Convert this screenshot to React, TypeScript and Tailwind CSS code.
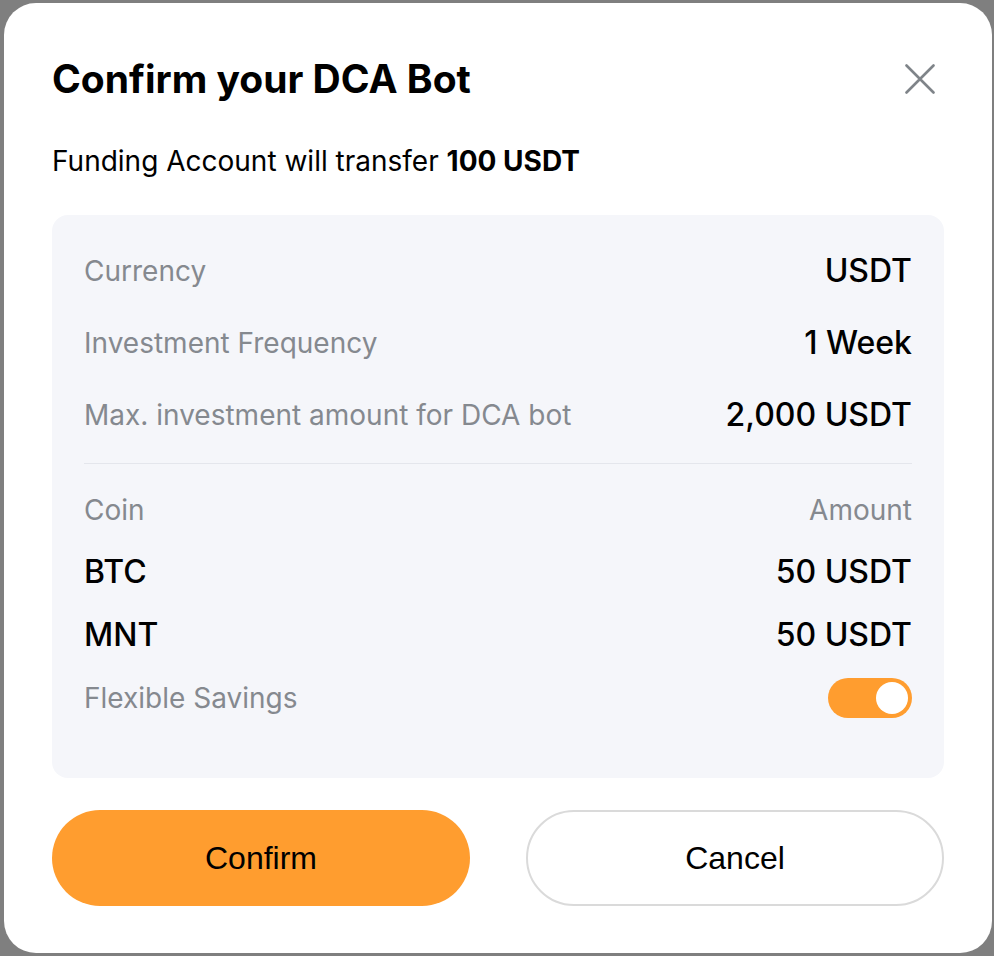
import { useState } from 'react';

const rows = [
  { label: 'Currency', value: 'USDT' },
  { label: 'Investment Frequency', value: '1 Week' },
  { label: 'Max. investment amount for DCA bot', value: '2,000 USDT' },
];

const coins = [
  { coin: 'BTC', amount: '50 USDT' },
  { coin: 'MNT', amount: '50 USDT' },
];

export default function App() {
  const [flexible, setFlexible] = useState(true);

  return (
    <div className="w-[994px] h-[956px] bg-[#7f7f7f] pt-[3px] pl-[4px] overflow-hidden font-['Inter',sans-serif]">
      <div className="w-[988px] h-[950px] bg-white rounded-[32px] px-12 pt-[54px] pb-12 flex flex-col">
        {/* Header */}
        <div className="flex items-center justify-between h-[44px]">
          <h1 className="text-[39px] leading-[44px] font-bold text-black">Confirm your DCA Bot</h1>
          <button className="mr-[9px]" aria-label="Close">
            <svg width="30" height="30" viewBox="0 0 30 30" fill="none">
              <path d="M1.5 1.5L28.5 28.5M28.5 1.5L1.5 28.5" stroke="#7f8489" strokeWidth="2.6" strokeLinecap="round" />
            </svg>
          </button>
        </div>

        <p className="mt-[44px] text-[28px] leading-[32px] text-black">
          Funding Account will transfer <span className="font-bold">100 USDT</span>
        </p>

        {/* Summary card */}
        <div className="mt-[38px] bg-[#f5f6fa] rounded-2xl px-8 pt-8 pb-[56px] flex flex-col">
          <div className="flex flex-col gap-6">
            {rows.map((r) => (
              <div key={r.label} className="h-12 flex items-center justify-between">
                <span className="text-[28px] text-[#85898f]">{r.label}</span>
                <span className="text-[32px] font-medium text-black">{r.value}</span>
              </div>
            ))}
          </div>

          <div className="mt-6 mb-[22px] h-px bg-[#e4e6ec]" />

          <div className="h-12 flex items-center justify-between text-[28px] text-[#85898f]">
            <span>Coin</span>
            <span>Amount</span>
          </div>

          {coins.map((c, i) => (
            <div key={c.coin} className={`h-12 flex items-center justify-between ${i === 0 ? 'mt-[14px]' : 'mt-[15px]'}`}>
              <span className="text-[32px] font-medium text-black">{c.coin}</span>
              <span className="text-[32px] font-medium text-black">{c.amount}</span>
            </div>
          ))}

          <div className="mt-[15px] h-12 flex items-center justify-between">
            <span className="text-[28px] text-[#85898f]">Flexible Savings</span>
            <button
              onClick={() => setFlexible(!flexible)}
              className={`w-[84px] h-10 rounded-full p-1 flex items-center ${flexible ? 'bg-[#ff9d2f] justify-end' : 'bg-[#d9dbe0] justify-start'}`}
            >
              <span className="w-8 h-8 rounded-full bg-white" />
            </button>
          </div>
        </div>

        {/* Actions */}
        <div className="mt-8 grid grid-cols-2 gap-14">
          <button className="h-24 rounded-full bg-[#ff9d2f] text-[32px] text-black font-['Liberation_Sans',Arial,sans-serif]">
            Confirm
          </button>
          <button className="h-24 rounded-full bg-white border-2 border-[#dadada] text-[32px] text-black font-['Liberation_Sans',Arial,sans-serif]">
            Cancel
          </button>
        </div>
      </div>
    </div>
  );
}
